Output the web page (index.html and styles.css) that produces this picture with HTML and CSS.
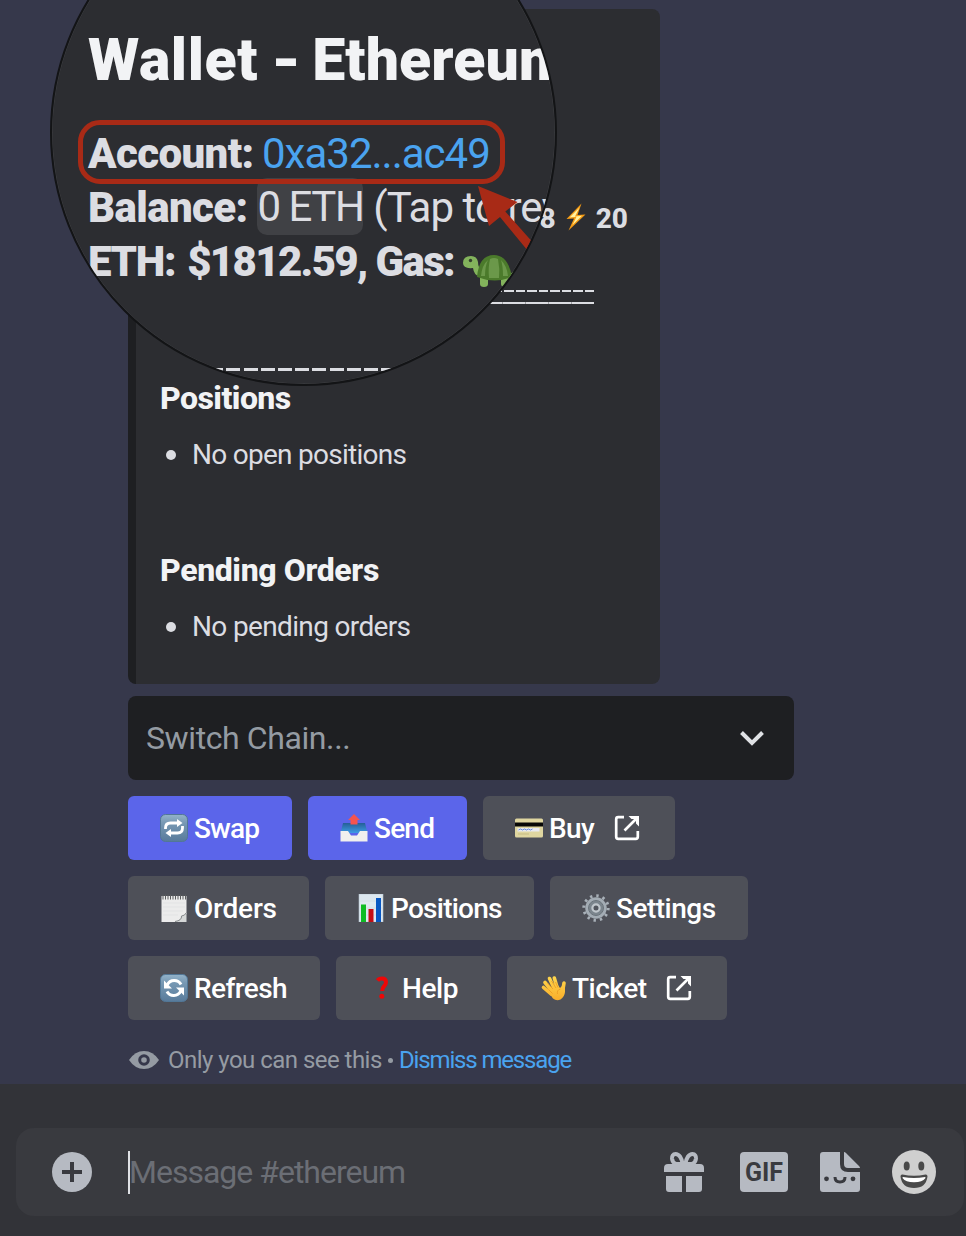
FILE: index.html
```
<!DOCTYPE html>
<html lang="en">
<head>
<meta charset="utf-8">
<title>Wallet - Ethereum</title>
<link rel="stylesheet" href="styles.css">
</head>
<body>
<svg width="0" height="0" class="defs">
  <defs>
    <linearGradient id="tile" x1="0" y1="0" x2="0" y2="1"><stop offset="0" stop-color="#93b3ca"/><stop offset=".3" stop-color="#7899b4"/><stop offset="1" stop-color="#587b9b"/></linearGradient>
    <linearGradient id="tray" x1="0" y1="0" x2="0" y2="1"><stop offset="0" stop-color="#245f96"/><stop offset="1" stop-color="#3f9be6"/></linearGradient>
    <linearGradient id="skin" gradientUnits="userSpaceOnUse" x1="0" y1="2" x2="0" y2="27"><stop offset="0" stop-color="#ffd84e"/><stop offset="1" stop-color="#f9ac29"/></linearGradient>
    <symbol id="external" viewBox="0 0 26 26"><path d="M10 2.2H4.2q-2 0-2 2v17.600q0 2 2 2h17.600q2 0 2-2V16M10.500 15.500 23 3" fill="none" stroke="#fff" stroke-width="2.700"/><path d="M14.500 1H25v10.500l-3-3V4h-4.500z" fill="#fff"/></symbol>
  </defs>
</svg>
<main class="app">
  <section class="message">
    <article class="embed">
      <div class="gas"><span>8</span>
        <svg class="bolt" viewBox="0 0 22 28"><path d="M16.500.500 1.500 16l7.500-.5L3.500 27.500 20.500 11.500l-8 .5z" fill="#f59b14"/><path d="M14.500 4.500 4.500 14.500l7-.8L7.500 22 17 12.800l-7 .7z" fill="#fff3a0"/></svg>
        <span>20</span></div>
      <div class="rules"></div>
      <h2 class="positions-title">Positions</h2>
      <ul class="list"><li class="item">No open positions</li></ul>
      <h2>Pending Orders</h2>
      <ul class="list"><li class="item pending">No pending orders</li></ul>
    </article>
    <div class="select"><span>Switch Chain...</span><svg width="26" height="18" viewBox="0 0 26 18"><path d="m2.500 3.500 10.500 10.500L23.500 3.500" fill="none" stroke="#dfe1e5" stroke-width="4"/></svg></div>
    <div class="actions">
      <div class="row">
        <button class="btn primary swap"><svg class="emoji" viewBox="0 0 28 28"><rect x=".5" y=".5" width="27" height="27" rx="5" fill="url(#tile)" stroke="#527796"/><path d="M5.500 15v-1q0-5 5-5h8M22.500 12v2q0 5-5 5H9.500" fill="none" stroke="#fff" stroke-width="2.800"/><path d="m17 5 5.500 4-5.500 4zM11 15l-5.500 4 5.500 4z" fill="#fff"/></svg>Swap</button>
        <button class="btn primary send"><svg class="emoji" viewBox="0 0 28 28"><path d="M3 9h22l2.500 10H.5z" fill="url(#tray)"/><path d="M.5 17H8l3 4.500h6l3-4.500h7.500v10.500H.5z" fill="#f1f0ee"/><path d="m14 0 6 6h-2.500v4.500h-7V6H8z" fill="#f4544e"/></svg>Send</button>
        <button class="btn buy"><svg class="emoji" viewBox="0 0 28 28"><rect y="4.500" width="28" height="19" rx="1.500" fill="#dfd6a0"/><path d="M0 8.500h28v4H0z" fill="#080806"/><path d="M2.500 14h22v3.500h-22z" fill="#e9eaf0"/><path d="m3.500 16 2-1 2 1 2-1 2 1 2-1 2 1 2-1" fill="none" stroke="#6c8fdb"/><path d="M3 20h11" stroke="#c5bb82"/></svg>Buy<svg class="ext"><use href="#external"/></svg></button>
      </div>
      <div class="row">
        <button class="btn orders"><svg class="emoji" viewBox="0 0 28 28"><path d="M1.500 2h25v17.500L18 28H1.500z" fill="#ececec"/><path d="M3 9h22M3 13h22M3 17h20M3 21h15" stroke="#dddfe0" stroke-width=".6"/><path d="M26.500 19V28H15q6-1.500 6.500-6 3 0 5-3z" fill="#d5d7d7"/><path d="M15 27.500q7-1 6.500-5.500 3 0 5-3.500" fill="none" stroke="#85898b"/><path d="M3 .5v5M5.500.5v5M8 .5v5M10.500.5v5M13 .5v5M15.500.5v5M18 .5v5M20.500.5v5M23 .5v5M25.500.5v5" stroke="#5b5d5e"/></svg>Orders</button>
        <button class="btn stats"><svg class="emoji" viewBox="0 0 28 28"><path d="M2 0h24v28H2z" fill="#dde8f0" stroke="#b6c4d0" stroke-width=".6"/><path d="M2.500 7h23M2.500 14h23M2.500 21h23" stroke="#c8d4df" stroke-width=".5"/><path d="M4 10.500h5V28H4z" fill="#0ebc23"/><path d="M11.500 15h5v13h-5z" fill="#c40d14"/><path d="M19 4h5v24h-5z" fill="#0757c3"/></svg>Positions</button>
        <button class="btn settings"><svg class="emoji" viewBox="0 0 28 28"><circle cx="14" cy="14" r="12.200" fill="none" stroke="#a8b0b8" stroke-width="3" stroke-dasharray="2.400 3.980"/><circle cx="14" cy="14" r="9" fill="#7b858d" stroke="#a3acb4" stroke-width="3.500"/><circle cx="14" cy="14" r="7.500" fill="none" stroke="#69727a" stroke-width="1"/><circle cx="14" cy="14" r="3.600" fill="#52565e" stroke="#c0c7cd" stroke-width="2.200"/></svg>Settings</button>
      </div>
      <div class="row">
        <button class="btn refresh"><svg class="emoji" viewBox="0 0 28 28"><rect x=".5" y=".5" width="27" height="27" rx="5" fill="url(#tile)" stroke="#527796"/><path d="M7.300 10.800A7.700 7.700 0 0 1 21 10.500M20.700 17.200A7.700 7.700 0 0 1 7 17.500" fill="none" stroke="#fff" stroke-width="3"/><path d="M4 6.500v8h8zM24 21.500v-8h-8z" fill="#fff"/></svg>Refresh</button>
        <button class="btn help"><svg class="emoji" viewBox="0 0 28 28"><path d="M9.500 6.500q1.500-2 4.500-2 4 0 4 3.800 0 2-2 4-1.800 1.700-1.800 4.700" fill="none" stroke="#ed0707" stroke-width="4"/><circle cx="13.800" cy="22.300" r="2.500" fill="#ed0707"/></svg>Help</button>
        <button class="btn ticket"><svg class="emoji" viewBox="0 0 28 28"><g fill="none" stroke="url(#skin)" stroke-width="3.600" stroke-linecap="round"><path d="M13 17 6 8.500M15 14 10.500 4.500M18 13 15.300 4M12 20 4.500 13.500"/><path d="m24 15 1-6"/></g><path d="m8 16 10-6 3 4 4-4q1.500 4 1 8-.5 5-4.500 7.500-4 2-7.500-1z" fill="url(#skin)"/><path d="m8.500 9 5.500 6M12.500 7l4.500 7M16.500 8l2.500 5.500M9.500 15.500l4 4M21.500 15q-4 1-3 5" fill="none" stroke="#e8951f" stroke-width=".7"/></svg>Ticket<svg class="ext"><use href="#external"/></svg></button>
      </div>
    </div>
    <footer class="private">
      <svg width="30" height="20" viewBox="0 0 30 20"><path d="M0 10Q6 1 15 1t15 9q-6 9-15 9T0 10z" fill="#959ba3"/><circle cx="15" cy="10" r="4.300" fill="none" stroke="#36384b" stroke-width="3"/></svg>
      <span class="only">Only you can see this</span><span class="dot"></span><a class="dismiss">Dismiss message</a>
    </footer>
  </section>
  <section class="composer">
    <div class="field">
      <svg class="plus" width="40" height="40" viewBox="0 0 40 40"><circle cx="20" cy="20" r="20" fill="#b6bac2"/><path d="M10 20h20M20 10v20" stroke="#393a3f" stroke-width="4"/></svg>
      <div class="placeholder">Message #ethereum</div>
      <svg class="gift" width="40" height="40" viewBox="0 0 40 40"><path d="M4 12h32q4 0 4 4v4H0v-4q0-4 4-4zM2 24h16v16H5q-3 0-3-3zM22 24h16v13q0 3-3 3H22z" fill="#b6bac2"/><path d="M18.500 12C18 6 15 2 11.500 2 9 2 7.800 4 8 6.500q.5 4.500 4 5.500zM21.500 12C22 6 25 2 28.500 2 31 2 32.200 4 32 6.500q-.5 4.500-4 5.500z" fill="none" stroke="#b6bac2" stroke-width="4"/></svg>
      <div class="gif">GIF</div>
      <svg class="sticker" width="40" height="40" viewBox="0 0 40 40"><path d="M3 0h17v12q0 8 8 8h12v17q0 3-3 3H3q-3 0-3-3V3q0-3 3-3zM24 0q1 0 2 1l13 13q1 1 1 2H28q-4 0-4-4z" fill="#b6bac2"/><g fill="#393a3f"><circle cx="6.500" cy="26.800" r="2.400"/><circle cx="33" cy="26.800" r="2.400"/></g><path d="M15 25q0 5 5 5t5-5" fill="none" stroke="#393a3f" stroke-width="3"/></svg>
      <svg class="smile" width="44" height="44" viewBox="0 0 44 44"><circle cx="22" cy="22" r="22" fill="#cfcfcf"/><ellipse cx="14.700" cy="16" rx="3" ry="4.500" fill="#494949"/><ellipse cx="29.300" cy="16" rx="3" ry="4.500" fill="#494949"/><path d="M10.500 24.500q11.500 2.500 23 0 2-.2 2 2Q34 38 22 38T8.500 26.500q0-2.200 2-2z" fill="#494949"/><path d="M11 27q11 2.200 22 0 .8 0 .3 1.200Q30.500 32.300 22 32.300T10.700 28.200Q10.200 27 11 27z" fill="#fff"/></svg>
    </div>
  </section>
  <div class="lens">
    <h1>Wallet <span class="hyphen">-</span> <span class="chain">Ethereum</span></h1>
    <div class="line account"><b>Account:</b><a>0xa32...ac49</a></div>
    <div class="line balance"><b>Balance:</b><span class="pill">0 ETH</span><span class="tap">(Tap to reveal)</span></div>
    <div class="line price"><b><span class="ticker">ETH:</span> $1812.59, Gas:</b>
      <svg class="turtle" width="56" height="36" viewBox="0 0 56 36"><path d="M17 23q-5-1-6-8Q1 16 1 10q0-7 8-7 6 0 7 6 0 6 4 8zM18 25h8v6q0 3-4 3t-4-3zM39 25h8v6q0 3-4 3t-4-3zM46 23l6-5q0 7-6 8z" fill="#83b35c"/><path d="M15 24Q17 2 32 2q14 0 18 22-17 7-35 0z" fill="#4b7a2b"/><path d="M26 7q-6 5-7 16h4Q23 13 26 7zM28 6q4-2 8 0 2 10 1 19H27Q26 14 28 6zM39 7q6 6 7 16h-5q0-10-2-16z" fill="#6b984a"/><circle cx="8.500" cy="7.500" r="1.700" fill="#34412d"/></svg></div>
    <div class="dashes"></div>
    <div class="highlight"></div>
    <svg class="arrow" width="80" height="80" viewBox="0 0 80 80"><path d="m0 0 39.500 16-12.200 9.500 40 45-7 7L22 31 11 40z" fill="#a82a16"/></svg>
  </div>
</main>
</body>
</html>
```
FILE: styles.css
```
* { box-sizing: border-box; }
body { margin: 0; background: #36384b; font-family: Roboto, "Noto Sans", sans-serif; }
h1, h2, ul { margin: 0; padding: 0; }
svg { flex: none; display: block; }
.defs { position: absolute; }
.app { position: relative; width: 966px; height: 1236px; overflow: hidden; background: #36384b; color: #dcdde2; }
.message { height: 1084px; padding: 9px 0 0 128px; }

.embed { width: 532px; height: 675px; padding: 193px 32px 0 24px; border-left: 8px solid #1e1f22; border-radius: 8px; background: #2c2d31; }
.gas { display: flex; align-items: center; justify-content: flex-end; gap: 9px; height: 32px; font-size: 28px; font-weight: 800; }
.bolt { width: 22px; height: 28px; margin-top: -3px; }
.rules { height: 14px; width: 434px; margin-top: 56px; background:
  repeating-linear-gradient(to left, #dcdde2 0 9.2px, transparent 9.2px 11.5px) top right / 100% 2px no-repeat,
  repeating-linear-gradient(to left, #dcdde2 0 11px, #a0a1a5 11px 11.5px) 0 12px / 100% 2px no-repeat; }
h2 { height: 40px; line-height: 40px; font-size: 32px; font-weight: 800; letter-spacing: -.38px; color: #f2f3f5; }
.positions-title { margin-top: 74px; letter-spacing: -.55px; }
.list { list-style: none; height: 132px; padding-top: 16.500px; }
.item { display: flex; align-items: center; gap: 16px; height: 40px; padding-left: 6px; font-size: 28px; letter-spacing: -.73px; }
.item::before { content: ""; width: 10px; height: 10px; border-radius: 50%; background: #dcdde2; }
.pending { letter-spacing: -.65px; }

.select { display: flex; align-items: center; justify-content: space-between; width: 666px; height: 84px; margin-top: 12px; padding: 0 29px 0 18px; border-radius: 8px; background: #1e1f22; color: #949ba3; font-size: 32px; letter-spacing: -.4px; }
.actions { display: grid; gap: 16px; margin-top: 16px; }
.row { display: flex; gap: 16px; }
.btn { display: flex; align-items: center; height: 64px; padding: 0 0 0 32px; border: 0; border-radius: 6px; background: #4e5058; color: #fff; font: 500 28px Roboto, sans-serif; letter-spacing: -.6px; }
.primary { background: #5b65ea; }
.emoji { width: 28px; height: 28px; margin: -1px 6px 0 0; }
.ext { width: 26px; height: 26px; margin-left: 20px; }
.swap { width: 164px; letter-spacing: -.9px; }
.send { width: 159px; letter-spacing: -.8px; }
.buy { width: 192px; }
.orders { width: 181px; letter-spacing: -.2px; }
.stats { width: 209px; letter-spacing: -.75px; }
.settings { width: 198px; letter-spacing: -.5px; }
.refresh { width: 192px; }
.help { width: 155px; letter-spacing: -.4px; }
.ticket { width: 220px; letter-spacing: -.5px; }
.ticket .emoji { margin-right: 5px; }
.private { display: flex; align-items: center; height: 32px; margin-top: 24px; padding-left: 1px; font-size: 24px; color: #959ba3; }
.only { width: 215px; margin-left: 9px; letter-spacing: -.53px; }
.dot { width: 5px; height: 5px; margin: 0 6px 0 5px; border-radius: 50%; background: #959ba3; }
.dismiss { letter-spacing: -1.15px; color: #4aa3ef; }

.composer { height: 152px; padding: 44px 2px 0 16px; background: #323338; }
.field { display: flex; align-items: center; height: 88px; padding: 0 28px 0 36px; border-radius: 18px; background: #393a3f; }
.placeholder { display: flex; align-items: center; flex: 1; height: 43px; margin-left: 36px; border-left: 2px solid #dfe1e5; font-size: 32px; letter-spacing: -1px; text-indent: -1px; color: #6b6e75; }
.gif { display: flex; align-items: center; justify-content: center; width: 48px; height: 40px; margin: 0 32px 0 36px; border-radius: 4px; background: #b6bac2; color: #393a3f; font-size: 25px; font-weight: 700; letter-spacing: 0; }
.smile { margin-left: 32px; }

/* Magnifier over the top of the embed */
.lens { position: absolute; left: 50px; top: -121px; width: 507px; height: 507px; padding: 144px 0 0 36px; overflow: hidden; border: 2px solid #131416; border-radius: 50%; background: #2c2d31; box-shadow: inset 0 0 0 .5px #424346; white-space: nowrap; }
.lens h1 { display: flex; height: 70px; margin-bottom: 31px; line-height: 70px; font-size: 59px; font-weight: 900; letter-spacing: .6px; color: #f2f3f5; }
.hyphen { width: 27px; margin: 0 14px 0 13px; transform: scaleX(1.15); transform-origin: left; }
.chain { letter-spacing: .1px; }
.line { display: flex; align-items: center; height: 54px; font-size: 42px; }
.line b { font-weight: 900; letter-spacing: -.6px; }
.account b { width: 165px; }
.account a { margin-left: 9px; letter-spacing: -1px; color: #4aa3ef; }
.balance b { width: 160px; }
.pill { height: 57px; width: 108px; margin: -1px 9px 0; padding-left: 1px; line-height: 57px; border-radius: 10px; background: #404145; letter-spacing: -1.5px; }
.tap { margin-left: 1px; letter-spacing: -.95px; }
.line.price b { width: 367px; letter-spacing: -1.65px; }
.ticker { margin-right: 3px; letter-spacing: -1.300px; }
.turtle { margin: 19px 0 0 7px; }
.dashes { height: 3px; width: 300px; margin: 80px 0 0 104px; background: repeating-linear-gradient(to right, #dcdde2 0 14px, transparent 14px 17.2px); }
.highlight { position: absolute; left: 26px; top: 239px; width: 427px; height: 64px; border: 5px solid #a82a16; border-radius: 22px; }
.arrow { position: absolute; left: 426px; top: 305px; }
```
